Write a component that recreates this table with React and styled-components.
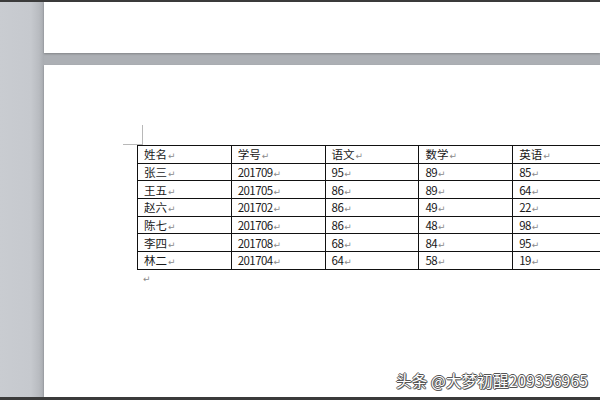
import React from "react";
import styled, { createGlobalStyle } from "styled-components";

const GlobalStyle = createGlobalStyle`
  html, body {
    margin: 0;
    padding: 0;
    width: 600px;
    height: 400px;
    overflow: hidden;
    font-family: "Noto Sans CJK SC", "Noto Sans", sans-serif;
  }
`;

const Frame = styled.div`
  position: relative;
  width: 600px;
  height: 400px;
  display: flex;
  flex-direction: column;
  overflow: hidden;
  background: #c8cbd0;
`;

const EdgeBar = styled.div`
  height: ${(p) => p.$h}px;
  flex: none;
  background: #3b3b3b;
`;

const Workspace = styled.div`
  flex: 1;
  display: flex;
  min-height: 0;
`;

const Gutter = styled.div`
  width: 44px;
  flex: none;
  background: linear-gradient(90deg, #c9ccd1 0%, #c6c9ce 70%, #b9bcc1 88%, #a9acb1 100%);
`;

const Canvas = styled.div`
  flex: 1;
  display: flex;
  flex-direction: column;
  gap: 12px;
  background: #acafb4;
  min-width: 0;
`;

const Page = styled.div`
  background: #ffffff;
  flex: ${(p) => (p.$grow ? "1" : "none")};
  height: ${(p) => (p.$grow ? "auto" : "51px")};
  box-shadow: 0 1px 2px rgba(0, 0, 0, 0.25);
  padding: ${(p) => (p.$grow ? "80px 0 0 93px" : "0")};
  box-sizing: border-box;
  overflow: hidden;
`;

const Body = styled.div`
  position: relative;
  width: 480px;

  &::before {
    content: "";
    position: absolute;
    left: -14px;
    top: -20px;
    width: 19px;
    height: 19px;
    border-right: 1px solid #b8b8b8;
    border-bottom: 1px solid #b8b8b8;
  }
`;

const Grid = styled.table`
  border-collapse: collapse;
  table-layout: fixed;
  width: 469px;
  font-size: 11.5px;
  color: #1a1a1a;
`;

const Col = styled.col`
  width: 93.8px;
`;

const Row = styled.tr`
  height: 17.7px;
`;

const Cell = styled.td`
  border: 1px solid #111;
  padding: 0 0 0 6px;
  height: 16.7px;
  box-sizing: border-box;
  line-height: 14px;
  white-space: nowrap;
  overflow: hidden;
  letter-spacing: ${(p) => (p.$num ? "-0.6px" : "0")};
`;

const Mark = styled.span`
  font-family: "DejaVu Sans", sans-serif;
  font-size: 9px;
  line-height: 1;
  color: #8a8a8a;
  margin-left: 1px;
  letter-spacing: 0;
`;

const EndMark = styled.div`
  margin: 4px 0 0 6px;
  font-family: "DejaVu Sans", sans-serif;
  font-size: 9px;
  color: #8a8a8a;
`;

const Watermark = styled.div`
  position: absolute;
  right: 12px;
  bottom: 9px;
  font-size: 15.5px;
  color: #ffffff;
  letter-spacing: 0.2px;
  text-shadow: -1px 0 #555, 1px 0 #555, 0 -1px #555, 0 1px #555, 1px 1px #777;
`;

const header = ["姓名", "学号", "语文", "数学", "英语"];
const rows = [
  ["张三", "201709", "95", "89", "85"],
  ["王五", "201705", "86", "89", "64"],
  ["赵六", "201702", "86", "49", "22"],
  ["陈七", "201706", "86", "48", "98"],
  ["李四", "201708", "68", "84", "95"],
  ["林二", "201704", "64", "58", "19"],
];

export default function App() {
  return (
    <>
      <GlobalStyle />
      <Frame>
        <EdgeBar $h={2} />
        <Workspace>
          <Gutter />
          <Canvas>
            <Page />
            <Page $grow>
              <Body>
                <Grid>
                  <colgroup>
                    {header.map((h) => (
                      <Col key={h} />
                    ))}
                  </colgroup>
                  <tbody>
                    <Row>
                      {header.map((h) => (
                        <Cell key={h}>
                          {h}
                          <Mark>↵</Mark>
                        </Cell>
                      ))}
                    </Row>
                    {rows.map((r) => (
                      <Row key={r[1]}>
                        {r.map((v, i) => (
                          <Cell key={i} $num={i > 0}>
                            {v}
                            <Mark>↵</Mark>
                          </Cell>
                        ))}
                      </Row>
                    ))}
                  </tbody>
                </Grid>
                <EndMark>↵</EndMark>
              </Body>
            </Page>
          </Canvas>
        </Workspace>
        <EdgeBar $h={3} />
        <Watermark>头条 @大梦初醒209356965</Watermark>
      </Frame>
    </>
  );
}
